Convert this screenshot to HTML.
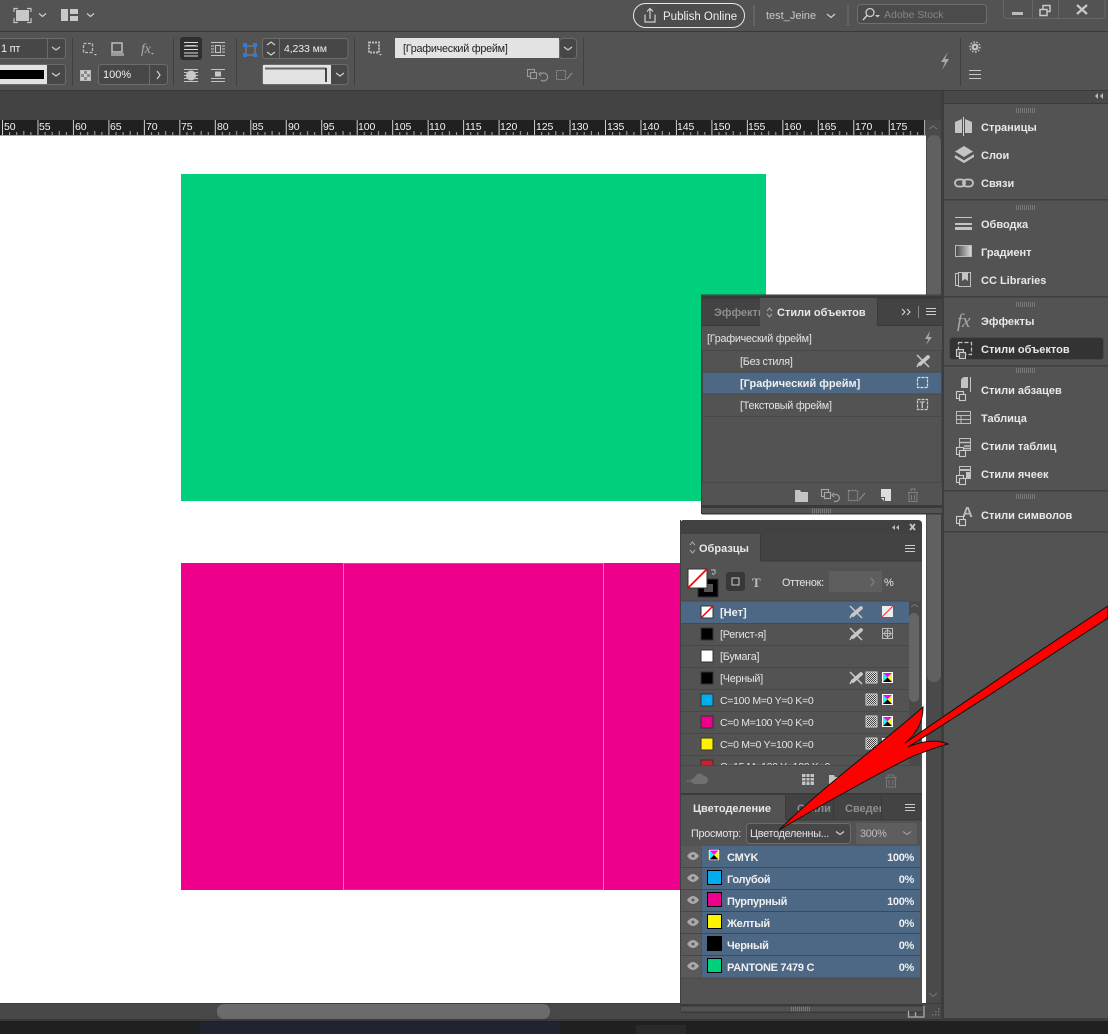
<!DOCTYPE html>
<html><head><meta charset="utf-8"><style>
html,body{margin:0;padding:0;background:#535353;overflow:hidden}
svg{display:block}
text{font-family:"Liberation Sans","Noto Sans CJK SC",sans-serif;font-size:10.8px;letter-spacing:-.25px;fill:#e4e4e4;white-space:pre}
.r text{font-size:10.5px;letter-spacing:-.1px;fill:#f2f2f2}
.d{font-weight:bold;font-size:11px;fill:#e8e8e8;letter-spacing:0}
.b{font-weight:bold;font-size:11px;fill:#f0f0f0;letter-spacing:-.3px}
.g{fill:#8e8e8e;font-weight:bold;font-size:11px;letter-spacing:0}
.i{fill:none;stroke:#c4c4c4;stroke-width:1.2}
.f{fill:#c4c4c4}
.c{fill:none;stroke:#d0d0d0;stroke-width:1.2}
</style></head><body>
<svg width="1108" height="1034" viewBox="0 0 1108 1034" xmlns="http://www.w3.org/2000/svg">
<defs>
<pattern id="tk" x="2" y="120" width="35.47" height="15" patternUnits="userSpaceOnUse">
<rect x="0" y="0" width="1" height="15" fill="#cfcfcf"/>
<rect x="7.1" y="12" width="1" height="3" fill="#aaa"/><rect x="14.2" y="12" width="1" height="3" fill="#aaa"/><rect x="21.3" y="11" width="1" height="4" fill="#aaa"/><rect x="28.4" y="12" width="1" height="3" fill="#aaa"/>
</pattern>
<pattern id="chk" width="2" height="2" patternUnits="userSpaceOnUse"><rect width="2" height="2" fill="#ddd"/><rect width="1" height="1" fill="#444"/><rect x="1" y="1" width="1" height="1" fill="#444"/></pattern>
<g id="cmyk"><rect x="0" y="0" width="11" height="11" fill="#fff"/><path d="M1 1H10L5.500 5.500Z" fill="#f0f"/><path d="M1 1V10L5.500 5.500Z" fill="#0ff"/><path d="M10 1V10L5.500 5.500Z" fill="#ff0"/><path d="M1 10H10L5.500 5.500Z" fill="#000"/></g>
<g id="nop"><path d="M1 1L13 13" stroke="#c8c8c8" stroke-width="1.500"/><path d="M1 13L3 9" stroke="#c8c8c8" stroke-width="1.500"/><path d="M4 10L12 3" stroke="#c8c8c8" stroke-width="3.800" stroke-linecap="round"/></g>
<rect id="chk1" width="11" height="11" fill="url(#chk)" stroke="#ccc"/>
<g id="grip"><path d="M.5 0v5M2.500 0v5M4.500 0v5M6.500 0v5M8.500 0v5M10.500 0v5M12.500 0v5M14.500 0v5M16.500 0v5M18.500 0v5" stroke="#777" stroke-width="1"/></g>
<g id="sty"><rect x=".5" y=".5" width="7" height="7" fill="#535353" stroke="#ccc" stroke-width="1.100"/><rect x="3.500" y="3.500" width="6" height="6" fill="#535353" stroke="#ccc" stroke-width="1.100"/></g>
</defs>

<rect width="1108" height="1034" fill="#535353"/>

<!-- top bar -->
<rect y="31" width="1108" height="1" fill="#393939"/>
<rect x="16" y="10" width="13" height="11" fill="#c8c8c8"/>
<path d="M14 12V8.500H18M27 8.500H31V12M14 18V22.500H18M27 22.500H31V18" class="i"/>
<path d="M39 13.500l3.500 3 3.500-3" class="c"/>
<rect x="61" y="9" width="7" height="12" fill="#c8c8c8"/><rect x="70" y="9" width="8" height="5" fill="#c8c8c8"/><rect x="70" y="16" width="8" height="5" fill="#c8c8c8"/>
<path d="M87 13.500l3.500 3 3.500-3" class="c"/>
<rect x="633.500" y="3.500" width="111" height="24" rx="12" fill="#4d4d4d" stroke="#e8e8e8"/>
<path d="M645 14.500V22H655V14.500M650 19V9M647 11.500L650 8.500L653 11.500" class="c"/>
<text x="663" y="20" style="font-size:11.500px;letter-spacing:0;fill:#eee">Publish Online</text>
<rect x="753" y="5" width="2" height="21" fill="#626262"/>
<text x="766" y="19" style="font-size:11px;letter-spacing:0;fill:#c8c8c8">test_Jeine</text>
<path d="M827 14l4 3.500 4-3.500" class="c" stroke-width="1.600"/>
<rect x="847" y="5" width="2" height="21" fill="#626262"/>
<rect x="857.500" y="4.500" width="129" height="19" rx="3" fill="#4b4b4b" stroke="#6e6e6e"/>
<circle cx="870" cy="12.500" r="4" fill="none" stroke="#ccc" stroke-width="1.300"/><path d="M867 15.500L863 20" stroke="#ccc" stroke-width="1.500"/><path d="M875 15h5l-2.500 2.500z" fill="#ccc"/>
<text x="884" y="18" style="fill:#868686;font-size:10.500px;letter-spacing:0">Adobe Stock</text>
<path d="M1003.500 0V14a4 4 0 0 0 4 4.500H1101a4 4 0 0 0 4-4.500V0" fill="none" stroke="#666"/>
<path d="M1032.500 0V18M1058.500 0V18" stroke="#666"/>
<rect x="1012" y="12" width="11" height="3" fill="#bbb"/>
<path d="M1040 9.500h7v6h-7zM1043 9V5.500h7v6h-3" fill="none" stroke="#c8c8c8" stroke-width="1.500"/>
<path d="M1077 5l10 9M1087 5l-10 9" stroke="#c8c8c8" stroke-width="2.200"/>

<!-- control bar -->
<rect y="90" width="1108" height="1" fill="#393939"/>
<rect y="91" width="943" height="29" fill="#434343"/>
<g fill="#414141"><rect x="72" y="38" width="1" height="48"/><rect x="173" y="38" width="1" height="48"/><rect x="236" y="38" width="1" height="48"/><rect x="354" y="38" width="1" height="48"/><rect x="583" y="38" width="1" height="48"/><rect x="960" y="38" width="1" height="48"/></g>
<rect x="-4" y="38.500" width="69.500" height="20" rx="3" fill="#474747" stroke="#6c6c6c"/><rect x="47" y="39" width="1" height="19" fill="#6c6c6c"/>
<text x="1" y="52" style="fill:#eee;font-size:11px">1 пт</text>
<path d="M52 47l4 3 4-3" class="c"/>
<rect x="-4" y="64.500" width="69.500" height="20" rx="3" fill="#474747" stroke="#6c6c6c"/>
<rect x="0" y="65" width="47" height="19" fill="#e3e3e3"/><rect x="0" y="70" width="44" height="9" fill="#000"/>
<path d="M52 73l4 3 4-3" class="c"/>
<rect x="83.500" y="43.500" width="9" height="9" fill="none" stroke="#bbb" stroke-dasharray="3 1.500" stroke-width="1.300"/><path d="M94 54h3l-1.500 1.500z" fill="#ccc"/>
<rect x="112" y="43" width="10" height="9" fill="none" stroke="#c4c4c4" stroke-width="1.400"/><rect x="111" y="53" width="13" height="3" fill="#999"/>
<text x="141" y="53" style="font-family:'Liberation Serif',serif;font-style:italic;font-size:14px;fill:#aaa">fx</text><path d="M151 53h3l-1.500 1.500z" fill="#bbb"/>
<rect x="80.500" y="70.500" width="10" height="10" fill="#8a8a8a" stroke="#bbb"/><path d="M81 71h3v3h-3zM87 71h3v3h-3zM84 74h3v3h-3zM81 77h3v3h-3zM87 77h3v3h-3z" fill="#ccc"/>
<rect x="98.500" y="64.500" width="69" height="20" rx="3" fill="#474747" stroke="#6c6c6c"/><rect x="149" y="65" width="1" height="19" fill="#6c6c6c"/>
<text x="103" y="78" style="fill:#eee;font-size:11px;letter-spacing:0">100%</text>
<path d="M157 71l3 4-3 4" class="c"/>
<rect x="180" y="37" width="22" height="23" rx="3" fill="#2f2f2f"/>
<path d="M184 42.500h14M184 46h14M184 49.500h14M184 53h14M184 56h14" stroke="#ddd" stroke-width="1"/>
<rect x="186" y="45" width="10" height="1" fill="#c8c8c8"/>
<path d="M211 42.500h14M211 55.500h14M211 46h3M211 49h3M211 52h3M222 46h3M222 49h3M222 52h3" stroke="#c4c4c4"/><rect x="215.500" y="45.500" width="5" height="7" fill="none" stroke="#c4c4c4"/>
<path d="M184 69.500h14M184 72.500h3M195 72.500h3M184 75.500h3M195 75.500h3M184 78.500h3M195 78.500h3M184 81.500h14" stroke="#c4c4c4"/><ellipse cx="191" cy="75.500" rx="5" ry="5" fill="#c8c8c8"/>
<path d="M211 69.500h14M211 78.500h14M211 81.500h14" stroke="#c4c4c4"/><rect x="215" y="71.500" width="6" height="5" fill="#c8c8c8"/>
<path d="M246 46h9v9h-9z" fill="none" stroke="#777" stroke-width="1.500"/>
<g fill="#2c7fd8"><rect x="243" y="43" width="4" height="4"/><rect x="253" y="43" width="4" height="4"/><rect x="243" y="53" width="4" height="4"/><rect x="253" y="53" width="4" height="4"/></g>
<rect x="262.500" y="38.500" width="85.500" height="20" rx="3" fill="#474747" stroke="#6c6c6c"/><rect x="279" y="39" width="1" height="19" fill="#6c6c6c"/>
<path d="M267 45l4-3 4 3M267 52l4 3 4-3" class="c"/>
<text x="284" y="52" style="fill:#eee;font-size:10.500px;letter-spacing:-.1px">4,233 мм</text>
<rect x="262.500" y="64.500" width="85.500" height="20" rx="3" fill="#474747" stroke="#6c6c6c"/>
<rect x="263" y="65" width="68" height="19" fill="#e3e3e3"/>
<path d="M265 68.500h61" stroke="#666" stroke-width="2"/><path d="M326 68v14" stroke="#111" stroke-width="1.500"/>
<path d="M336 73l4 3 4-3" class="c"/>
<rect x="369" y="42.500" width="10" height="10" fill="none" stroke="#bbb" stroke-dasharray="2 1" stroke-width="2"/><path d="M379 54h3l-1.500 1.500z" fill="#ccc"/>
<rect x="395" y="38" width="164" height="20" fill="#e3e3e3"/>
<text x="403" y="52" style="fill:#222">[Графический фрейм]</text>
<rect x="559.500" y="38.500" width="17" height="20" rx="3" fill="#474747" stroke="#6c6c6c"/>
<path d="M564 47l4 3 4-3" class="c"/>
<g opacity=".6"><use href="#sty" x="527" y="69"/><path d="M541 74a4 4 0 1 1 0 6M541 72l-2 2 2 2" class="i"/><rect x="556.500" y="70.500" width="9" height="9" fill="none" stroke="#bbb" stroke-dasharray="2 1"/><path d="M567 79l5-6" stroke="#bbb"/></g>
<path d="M948 52L941 62H945L942 70L949 59H945Z" fill="#a8a8a8"/>
<circle cx="975" cy="47" r="3.500" fill="#c0c0c0"/><circle cx="975" cy="47" r="1.200" fill="#535353"/><circle cx="975" cy="47" r="5" fill="none" stroke="#c0c0c0" stroke-dasharray="1.500 1.600" stroke-width="1.500"/>
<path d="M969 70.500h12M969 74.500h12M969 78.500h12" stroke="#c8c8c8"/>

<!-- ruler -->
<rect x="0" y="120" width="925" height="15" fill="#202020"/>
<rect x="0" y="120" width="925" height="15" fill="url(#tk)"/>
<g class="r">
<text x="4" y="130">50</text><text x="39" y="130">55</text><text x="75" y="130">60</text><text x="110" y="130">65</text><text x="146" y="130">70</text><text x="181" y="130">75</text><text x="217" y="130">80</text><text x="252" y="130">85</text><text x="288" y="130">90</text><text x="323" y="130">95</text><text x="358" y="130">100</text><text x="394" y="130">105</text><text x="429" y="130">110</text><text x="465" y="130">115</text><text x="500" y="130">120</text><text x="536" y="130">125</text><text x="571" y="130">130</text><text x="607" y="130">135</text><text x="642" y="130">140</text><text x="677" y="130">145</text><text x="713" y="130">150</text><text x="748" y="130">155</text><text x="784" y="130">160</text><text x="819" y="130">165</text><text x="855" y="130">170</text><text x="890" y="130">175</text>
</g>

<!-- canvas -->
<rect x="0" y="135.500" width="926" height="868" fill="#fff"/>
<rect x="181" y="174" width="585" height="327" fill="#00cf7b"/>
<rect x="181" y="563" width="510" height="327" fill="#ee008c"/>
<path d="M343.500 563V890M603.500 563V890" stroke="#f76cc0" stroke-width="1"/><path d="M344 563.500H603" stroke="#f03ba6"/><path d="M344 889.500H603" stroke="#5f5ad8"/>

<!-- v scrollbar -->
<rect x="926" y="120" width="16" height="899" fill="#4a4a4a"/>
<rect x="927" y="135" width="14" height="547" rx="7" fill="#606060"/>
<path d="M929 129l4-3 4 3" stroke="#777" fill="none"/>
<rect x="923" y="515" width="3" height="488" fill="#fff"/>
<path d="M929 993l4 3.500 4-3.500" stroke="#777" fill="none"/>

<!-- h scrollbar & taskbar -->
<rect x="0" y="1003" width="943" height="16" fill="#484848"/>
<rect x="0" y="1003" width="943" height="1" fill="#3c3c3c"/>
<rect x="217" y="1004" width="333" height="15" rx="7" fill="#6b6b6b"/>
<rect x="0" y="1019" width="1108" height="2" fill="#393939"/>
<rect x="0" y="1021" width="1108" height="13" fill="#1f2022"/>
<rect x="200" y="1022" width="360" height="12" fill="#1f2430"/>
<rect x="636" y="1025" width="50" height="9" rx="2" fill="#2a2a28"/>

<!-- right dock -->
<rect x="941" y="91" width="3" height="930" fill="#3d3d3d"/>
<rect x="944" y="91" width="164" height="928" fill="#535353"/>
<rect x="944" y="91" width="164" height="12" fill="#484848"/>
<rect x="944" y="103" width="164" height="1" fill="#3b3b3b"/>
<rect x="944" y="1018" width="164" height="3" fill="#3c3c3c"/>
<path d="M1098 93l-3 3 3 3zM1103 93l-3 3 3 3z" fill="#bbb"/>
<use href="#grip" x="1016" y="108"/>
<g fill="#3f3f3f"><rect x="944" y="199" width="164" height="1.500"/><rect x="944" y="296" width="164" height="1.500"/><rect x="944" y="365" width="164" height="1.500"/><rect x="944" y="490" width="164" height="1.500"/><rect x="944" y="531" width="164" height="1.500"/></g>
<use href="#grip" x="1016" y="205"/><use href="#grip" x="1016" y="302"/><use href="#grip" x="1016" y="368"/><use href="#grip" x="1016" y="494"/>

<path d="M955 122l7-3v14h-7zM972 122l-7-3v14h7z" class="f"/><path d="M963.500 117v19" stroke="#d0d0d0"/>
<path d="M964 146l9 5.500-9 5.500-9-5.500z" class="f"/><path d="M955 156l9 5.500 9-5.500v0.500l-9 5.500-9-5.500" fill="none" stroke="#c4c4c4" stroke-width="2"/>
<rect x="955" y="179.500" width="10" height="7" rx="3.500" fill="none" stroke="#c4c4c4" stroke-width="1.800"/><rect x="963" y="179.500" width="10" height="7" rx="3.500" fill="none" stroke="#c4c4c4" stroke-width="1.800"/>
<path d="M955 217.500h17" stroke="#c4c4c4"/><rect x="955" y="223" width="17" height="2" fill="#c4c4c4"/><rect x="955" y="227" width="17" height="3" fill="#c4c4c4"/>
<linearGradient id="gd"><stop offset="0" stop-color="#444"/><stop offset="1" stop-color="#ddd"/></linearGradient>
<rect x="955.500" y="245.500" width="16" height="11" fill="url(#gd)" stroke="#bbb"/>
<rect x="955.500" y="273.500" width="12" height="12" fill="none" stroke="#c0c0c0"/><rect x="958.500" y="272.500" width="12" height="14" fill="#535353" stroke="#c0c0c0"/><path d="M962 273h6v8l-3-2-3 2z" class="f"/>
<text x="957" y="327" style="font-family:'Liberation Serif',serif;font-style:italic;font-size:19px;fill:#aaa">fx</text>
<rect x="949.500" y="337.500" width="154" height="22" rx="3" fill="#333" stroke="#494949"/>
<rect x="958.500" y="342.500" width="13" height="12" fill="none" stroke="#c4c4c4" stroke-dasharray="4 2" stroke-width="1.200"/>
<use href="#sty" x="956" y="349"/>
<path d="M961 388v-7a4 4 0 0 1 4-4h3v11z" class="f"/><path d="M970.500 377v15" stroke="#c4c4c4"/>
<use href="#sty" x="956" y="391"/>
<rect x="956.500" y="411.500" width="14" height="12" fill="none" stroke="#bbb"/><path d="M956 415.500h15M956 419.500h15M961 415v9" stroke="#bbb"/>
<rect x="959.500" y="438.500" width="11" height="12" fill="none" stroke="#c0c0c0"/><path d="M960 442.500h10M964 446h6M964 448.500h6" stroke="#c0c0c0" stroke-width="1.500"/>
<use href="#sty" x="956" y="447"/>
<rect x="959.500" y="466.500" width="11" height="12" fill="none" stroke="#c0c0c0"/><path d="M960 470h10" stroke="#c0c0c0" stroke-width="2"/><rect x="966" y="472" width="4" height="6" class="f"/>
<use href="#sty" x="956" y="475"/>
<text x="962" y="517" style="font-size:15px;font-weight:bold;fill:#bbb">A</text>
<use href="#sty" x="956" y="516"/>

<text x="981" y="131" class="d">Страницы</text><text x="981" y="159" class="d">Слои</text><text x="981" y="187" class="d">Связи</text>
<text x="981" y="228" class="d">Обводка</text><text x="981" y="256" class="d">Градиент</text><text x="981" y="284" class="d">CC Libraries</text>
<text x="981" y="325" class="d">Эффекты</text><text x="981" y="353" class="d">Стили объектов</text>
<text x="981" y="394" class="d">Стили абзацев</text><text x="981" y="422" class="d">Таблица</text><text x="981" y="450" class="d">Стили таблиц</text><text x="981" y="478" class="d">Стили ячеек</text>
<text x="981" y="519" class="d">Стили символов</text>

<!-- object styles panel -->
<rect x="701" y="295" width="241" height="219" fill="#535353"/>
<path d="M701.500 514V295H942" fill="none" stroke="#3a3a3a"/>
<rect x="702" y="296" width="240" height="30" fill="#434343"/>
<rect x="702" y="296" width="240" height="3" fill="#3a3a3a"/>
<text x="714" y="316" class="g">Эффекты</text>
<rect x="760" y="298" width="117" height="28" fill="#535353"/>
<rect x="877" y="298" width="1" height="27" fill="#3a3a3a"/><rect x="702" y="325" width="58" height="1" fill="#3a3a3a"/><rect x="877" y="325" width="65" height="1" fill="#3a3a3a"/>
<path d="M767 311l2.500-3 2.500 3M767 314l2.500 3 2.500-3" fill="none" stroke="#aaa"/>
<text x="777" y="316" class="d">Стили объектов</text>
<path d="M902 309l3 3-3 3M907 309l3 3-3 3" fill="none" stroke="#ddd"/>
<path d="M918.500 306v12" stroke="#888"/>
<path d="M926 308.500h10M926 311.500h10M926 314.500h10" stroke="#ccc"/>
<text x="707" y="342">[Графический фрейм]</text>
<path d="M930 331L925 339H928.500L926 345L932 337H928.500Z" fill="#aaa"/>
<rect x="702.500" y="350.500" width="239" height="132" fill="#535353" stroke="#484848"/>
<rect x="703" y="372" width="238" height="22" fill="#4d6884"/>
<path d="M703 372h238M703 416.500h238M703 394h238" stroke="#484848"/>
<text x="740" y="365">[Без стиля]</text>
<text x="740" y="387" class="b" style="letter-spacing:0">[Графический фрейм]</text>
<text x="740" y="409">[Текстовый фрейм]</text>
<use href="#nop" x="916" y="354"/>
<rect x="917.500" y="377.500" width="10" height="10" fill="none" stroke="#ddd" stroke-dasharray="3 1" stroke-width="1.200"/>
<rect x="917.500" y="399.500" width="10" height="10" fill="none" stroke="#ccc" stroke-dasharray="3 1" stroke-width="1.200"/><text x="919.500" y="408" style="font-size:9px;font-weight:bold;fill:#ccc">T</text>
<path d="M795 490h5l1 2h7v10h-13z" fill="#c4c4c4"/>
<g opacity=".7"><use href="#sty" x="821" y="489"/><path d="M834 495a3.500 3.500 0 1 1 0 6M834 493l-2 2 2 2" class="i"/></g>
<g opacity=".5"><rect x="848.500" y="490.500" width="9" height="10" fill="none" stroke="#ccc" stroke-dasharray="2 1" stroke-width="1.200"/><path d="M859 500l6-7" stroke="#ccc"/></g>
<path d="M881 489h10v12h-6v-4h-4z" fill="#ddd"/><path d="M881 498h3v3z" fill="#ddd"/>
<path d="M908 492.500h10M911 491v-2h4v2M909 493v8.500h8V493M911.500 495v5M914.500 495v5" fill="none" stroke="#808080"/>
<rect x="702" y="505" width="240" height="3" fill="#3a3a3a"/>
<rect x="702" y="513" width="240" height="1.500" fill="#3a3a3a"/>
<use href="#grip" x="812" y="508.500"/>

<!-- swatches panel -->
<path d="M680 524a4 4 0 0 1 4-4H918a4 4 0 0 1 4 4V1012H680z" fill="#535353"/>
<path d="M680 524a4 4 0 0 1 4-4H918a4 4 0 0 1 4 4V534H680z" fill="#414141"/>
<rect x="681" y="534" width="241" height="27" fill="#434343"/>
<rect x="681" y="534" width="79" height="27" fill="#535353"/>
<rect x="760" y="534" width="1" height="27" fill="#3a3a3a"/><rect x="761" y="560.500" width="161" height="1" fill="#3a3a3a"/>
<rect x="680" y="520" width="1" height="492" fill="#3f3f3f"/>
<path d="M895 525l-3 2.500 3 2.500zM899 525l-3 2.500 3 2.500z" fill="#bbb"/>
<path d="M910 524l5 6M915 524l-5 6" stroke="#c4c4c4" stroke-width="1.800"/>
<path d="M690 545l2.500-3 2.500 3M690 550l2.500 3 2.500-3" fill="none" stroke="#aaa"/>
<text x="699" y="552" class="d">Образцы</text>
<path d="M905 545.500h10M905 548.500h10M905 551.500h10" stroke="#ccc"/>
<rect x="698" y="579" width="20" height="18" fill="#000" stroke="#333"/><rect x="704" y="584" width="9" height="8" fill="#535353"/>
<rect x="688" y="569" width="19" height="19" fill="#fff" stroke="#333"/><path d="M688 588L707 569" stroke="#e00" stroke-width="1.600"/>
<path d="M711 570h4v4M714 575l-2-2" fill="none" stroke="#bbb"/>
<rect x="726" y="572" width="19" height="19" rx="3" fill="#383838"/><rect x="732" y="578" width="7" height="7" fill="none" stroke="#ccc"/>
<text x="752" y="587" style="font-family:'Liberation Serif',serif;font-weight:bold;font-size:13px;fill:#bbb">T</text>
<text x="782" y="586">Оттенок:</text>
<rect x="829" y="571" width="53" height="21" fill="#5e5e5e"/>
<path d="M871 578l3 4-3 4" fill="none" stroke="#888"/>
<text x="884" y="586" style="font-size:11px">%</text>
<rect x="681" y="601" width="241" height="166" fill="#535353"/>
<rect x="681" y="601" width="228" height="22" fill="#4d6884"/>
<path d="M681 601h228M681 645.500h228M681 667.500h228M681 689.500h228M681 711.500h228M681 733.500h228M681 755.500h228" stroke="#484848"/>
<path d="M681 623.500h228" stroke="#484848"/>
<rect x="701" y="606" width="12" height="12" fill="#fff" stroke="#333"/><path d="M701 618L713 606" stroke="#e00" stroke-width="1.500"/>
<rect x="701" y="628" width="12" height="12" fill="#000" stroke="#333"/>
<rect x="701" y="650" width="12" height="12" fill="#fff" stroke="#333"/>
<rect x="701" y="672" width="12" height="12" fill="#000" stroke="#333"/>
<rect x="701" y="694" width="12" height="12" fill="#00aeef" stroke="#333"/>
<rect x="701" y="716" width="12" height="12" fill="#ec008c" stroke="#333"/>
<rect x="701" y="738" width="12" height="12" fill="#fff200" stroke="#333"/>
<rect x="701" y="760" width="12" height="12" fill="#c8202f" stroke="#333"/>
<text x="720" y="616" class="b" style="letter-spacing:0">[Нет]</text>
<text x="720" y="638">[Регист-я]</text>
<text x="720" y="660">[Бумага]</text>
<text x="720" y="682">[Черный]</text>
<text x="720" y="704" style="font-size:10.500px;letter-spacing:-.3px">C=100 M=0 Y=0 K=0</text>
<text x="720" y="726" style="font-size:10.500px;letter-spacing:-.3px">C=0 M=100 Y=0 K=0</text>
<text x="720" y="748" style="font-size:10.500px;letter-spacing:-.3px">C=0 M=0 Y=100 K=0</text>
<text x="720" y="770" style="font-size:10.500px;letter-spacing:-.3px">C=15 M=100 Y=100 K=0</text>
<use href="#nop" x="849" y="605"/><use href="#nop" x="849" y="627"/><use href="#nop" x="849" y="671"/>
<rect x="882" y="606" width="11" height="11" fill="#eee"/><path d="M882 617L893 606" stroke="#e33"/>
<rect x="882.500" y="628.500" width="10" height="10" fill="none" stroke="#bbb"/><circle cx="887.500" cy="633.500" r="3" fill="none" stroke="#bbb"/><path d="M887.500 628v11M882 633.500h11" stroke="#bbb"/>
<use href="#chk1" x="866" y="672"/><use href="#cmyk" x="882" y="672"/>
<use href="#chk1" x="866" y="694"/><use href="#cmyk" x="882" y="694"/>
<use href="#chk1" x="866" y="716"/><use href="#cmyk" x="882" y="716"/>
<use href="#chk1" x="866" y="738"/><use href="#cmyk" x="882" y="738"/>
<rect x="909" y="601" width="12" height="166" fill="#4a4a4a"/>
<rect x="909" y="613" width="10" height="89" rx="5" fill="#656565"/>
<path d="M911 607l3.500-2.500 3.500 2.500" fill="none" stroke="#777"/>
<rect x="681" y="765" width="241" height="28" fill="#535353"/>
<path d="M681 765.500h240" stroke="#484848"/>
<path d="M694 784a4 4 0 0 1 1-7 5 5 0 0 1 9-1 4 4 0 0 1 0 8z" fill="#707070"/><path d="M686 781h7l-2-2m2 2l-2 2" stroke="#707070" fill="none"/>
<rect x="802" y="774" width="12" height="11" fill="#c4c4c4"/><path d="M802 777.500h12M802 781h12M806 774v11M810 774v11" stroke="#535353"/>
<path d="M829 775h5l1 2h6v9h-12z" fill="#c4c4c4"/>
<path d="M885 777.500h12M888 777v-2h6v2M886.500 778v9h9v-9M889 780v5M893 780v5" fill="none" stroke="#777"/>
<rect x="681" y="793" width="241" height="27" fill="#434343"/>
<rect x="681" y="793" width="241" height="1.500" fill="#3a3a3a"/>
<rect x="681" y="795" width="104" height="25" fill="#535353"/>
<text x="693" y="812" class="d">Цветоделение</text>
<text x="797" y="812" class="g">Стили</text>
<text x="845" y="812" class="g">Сведения</text>
<rect x="881" y="795" width="41" height="25" fill="#434343"/>
<path d="M785.500 795v25M833.500 795v25M881.500 795v25" stroke="#3a3a3a"/><path d="M786 820h136" stroke="#3a3a3a"/>
<path d="M905 804.500h10M905 807.500h10M905 810.500h10" stroke="#ccc"/>
<text x="691" y="837">Просмотр:</text>
<rect x="746.500" y="823.500" width="104" height="20" rx="3" fill="#474747" stroke="#6c6c6c"/>
<text x="750" y="837">Цветоделенны...</text>
<path d="M836 831.500l4 3 4-3" class="c"/>
<rect x="856" y="823" width="61" height="21" rx="2" fill="#5e5e5e"/>
<text x="860" y="837" style="fill:#bbb">300%</text>
<path d="M903 831.500l4 3 4-3" fill="none" stroke="#aaa"/>
<rect x="681" y="846" width="20" height="132" fill="#5a5a5a"/>
<rect x="702" y="846" width="218" height="132" fill="#4d6884"/>
<path d="M681 867.500h239M681 889.500h239M681 911.500h239M681 933.500h239M681 955.500h239" stroke="#474747"/>
<path d="M681 978h240" stroke="#4a4a4a"/>
<g fill="#aaa"><path d="M687 856q6-8 12 0q-6 8-12 0z"/><path d="M687 878q6-8 12 0q-6 8-12 0z"/><path d="M687 900q6-8 12 0q-6 8-12 0z"/><path d="M687 922q6-8 12 0q-6 8-12 0z"/><path d="M687 944q6-8 12 0q-6 8-12 0z"/><path d="M687 966q6-8 12 0q-6 8-12 0z"/></g>
<g fill="#5a5a5a"><circle cx="693" cy="856" r="1.500"/><circle cx="693" cy="878" r="1.500"/><circle cx="693" cy="900" r="1.500"/><circle cx="693" cy="922" r="1.500"/><circle cx="693" cy="944" r="1.500"/><circle cx="693" cy="966" r="1.500"/></g>
<rect x="708" y="849" width="12" height="12" fill="#000"/><use href="#cmyk" x="708.500" y="849.500"/>
<rect x="707.500" y="870.500" width="14" height="14" fill="#00aeef" stroke="#000"/>
<rect x="707.500" y="892.500" width="14" height="14" fill="#ec008c" stroke="#000"/>
<rect x="707.500" y="914.500" width="14" height="14" fill="#fff200" stroke="#000"/>
<rect x="707.500" y="936.500" width="14" height="14" fill="#000" stroke="#000"/>
<rect x="707.500" y="958.500" width="14" height="14" fill="#00cf7b" stroke="#000"/>
<text x="727" y="861" class="b">CMYK</text><text x="727" y="883" class="b">Голубой</text><text x="727" y="905" class="b">Пурпурный</text><text x="727" y="927" class="b">Желтый</text><text x="727" y="949" class="b">Черный</text><text x="727" y="971" class="b">PANTONE 7479 C</text>
<g text-anchor="end"><text x="914" y="861" class="b">100%</text><text x="914" y="883" class="b">0%</text><text x="914" y="905" class="b">100%</text><text x="914" y="927" class="b">0%</text><text x="914" y="949" class="b">0%</text><text x="914" y="971" class="b">0%</text></g>
<rect x="681" y="1004" width="241" height="2.500" fill="#3a3a3a"/>
<rect x="681" y="1011.500" width="241" height="1.500" fill="#3a3a3a"/>
<use href="#grip" x="791" y="1006.500"/>
<path d="M908.500 1011v6h15.500v-11M915.500 1012v5" fill="none" stroke="#aaa" stroke-width="1.300"/>
<g fill="#707070"><rect x="938" y="1008" width="1.500" height="1.500"/><rect x="935" y="1011" width="1.500" height="1.500"/><rect x="938" y="1011" width="1.500" height="1.500"/><rect x="932" y="1014" width="1.500" height="1.500"/><rect x="935" y="1014" width="1.500" height="1.500"/><rect x="938" y="1014" width="1.500" height="1.500"/></g>

<!-- red arrow -->
<path d="M779 830C825 785 880 745 923 707C923 722 917 733 905 743C975 695 1040 650 1108 606V618C1040 662 975 705 908 747C922 741 936 739 948 744C930 749 925 752 913 756C870 778 825 803 779 830Z" fill="#fe0000" stroke="#111" stroke-width="1"/>
</svg>
</body></html>
